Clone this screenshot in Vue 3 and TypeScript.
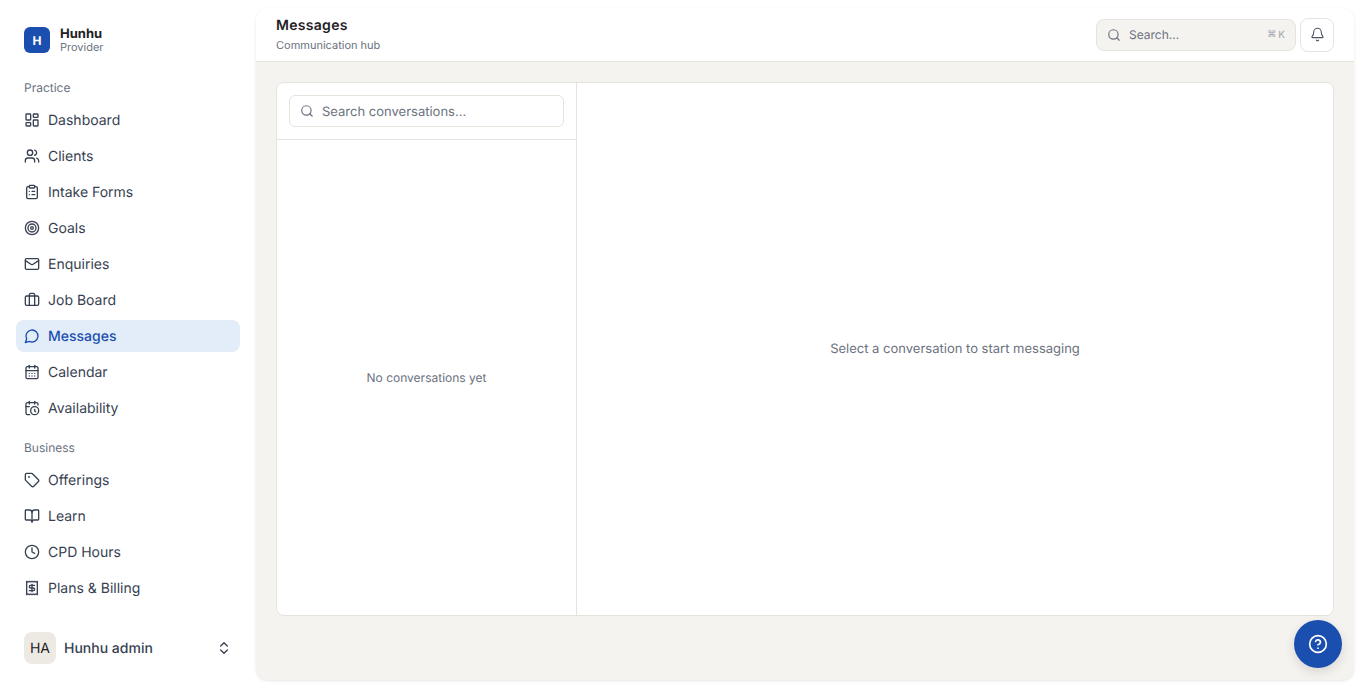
<script setup lang="ts">
interface NavItem { label: string; icon: string; active?: boolean }
const practice: NavItem[] = [
  { label: 'Dashboard', icon: 'dash' },
  { label: 'Clients', icon: 'users' },
  { label: 'Intake Forms', icon: 'clip' },
  { label: 'Goals', icon: 'target' },
  { label: 'Enquiries', icon: 'mail' },
  { label: 'Job Board', icon: 'brief' },
  { label: 'Messages', icon: 'msg', active: true },
  { label: 'Calendar', icon: 'cal' },
  { label: 'Availability', icon: 'calclock' },
]
const business: NavItem[] = [
  { label: 'Offerings', icon: 'tag' },
  { label: 'Learn', icon: 'book' },
  { label: 'CPD Hours', icon: 'clock' },
  { label: 'Plans & Billing', icon: 'receipt' },
]
const groups = [
  { title: 'Practice', items: practice },
  { title: 'Business', items: business },
]
const icons: Record<string, string> = {
  dash: '<rect width="7" height="9" x="3" y="3" rx="1"/><rect width="7" height="5" x="14" y="3" rx="1"/><rect width="7" height="9" x="14" y="12" rx="1"/><rect width="7" height="5" x="3" y="16" rx="1"/>',
  users: '<path d="M16 21v-2a4 4 0 0 0-4-4H6a4 4 0 0 0-4 4v2"/><circle cx="9" cy="7" r="4"/><path d="M22 21v-2a4 4 0 0 0-3-3.87"/><path d="M16 3.13a4 4 0 0 1 0 7.75"/>',
  clip: '<rect width="8" height="4" x="8" y="2" rx="1"/><path d="M16 4h2a2 2 0 0 1 2 2v14a2 2 0 0 1-2 2H6a2 2 0 0 1-2-2V6a2 2 0 0 1 2-2h2"/><path d="M12 11h4"/><path d="M12 16h4"/><path d="M8 11h.01"/><path d="M8 16h.01"/>',
  target: '<circle cx="12" cy="12" r="10"/><circle cx="12" cy="12" r="6"/><circle cx="12" cy="12" r="2"/>',
  mail: '<rect width="20" height="16" x="2" y="4" rx="2"/><path d="m22 7-8.97 5.7a1.94 1.94 0 0 1-2.06 0L2 7"/>',
  brief: '<path d="M16 20V4a2 2 0 0 0-2-2h-4a2 2 0 0 0-2 2v16"/><rect width="20" height="14" x="2" y="6" rx="2"/>',
  msg: '<path d="M7.9 20A9 9 0 1 0 4 16.1L2 22Z"/>',
  cal: '<path d="M8 2v4"/><path d="M16 2v4"/><rect width="18" height="18" x="3" y="4" rx="2"/><path d="M3 10h18"/><path d="M8 14h.01"/><path d="M12 14h.01"/><path d="M16 14h.01"/><path d="M8 18h.01"/><path d="M12 18h.01"/><path d="M16 18h.01"/>',
  calclock: '<path d="M21 7.5V6a2 2 0 0 0-2-2H5a2 2 0 0 0-2 2v14a2 2 0 0 0 2 2h3.5"/><path d="M16 2v4"/><path d="M8 2v4"/><path d="M3 10h5"/><path d="M17.5 17.5 16 16.3V14"/><circle cx="16" cy="16" r="6"/>',
  tag: '<path d="M12.586 2.586A2 2 0 0 0 11.172 2H4a2 2 0 0 0-2 2v7.172a2 2 0 0 0 .586 1.414l8.704 8.704a2.426 2.426 0 0 0 3.42 0l6.58-6.58a2.426 2.426 0 0 0 0-3.42z"/><circle cx="7.5" cy="7.5" r=".5" fill="currentColor"/>',
  book: '<path d="M12 7v14"/><path d="M3 18a1 1 0 0 1-1-1V4a1 1 0 0 1 1-1h5a4 4 0 0 1 4 4 4 4 0 0 1 4-4h5a1 1 0 0 1 1 1v13a1 1 0 0 1-1 1h-6a3 3 0 0 0-3 3 3 3 0 0 0-3-3z"/>',
  clock: '<circle cx="12" cy="12" r="10"/><polyline points="12 6 12 12 16 14"/>',
  receipt: '<path d="M4 2v20l2-1 2 1 2-1 2 1 2-1 2 1 2-1 2 1V2l-2 1-2-1-2 1-2-1-2 1-2-1-2 1Z"/><path d="M16 8h-6a2 2 0 1 0 0 4h4a2 2 0 1 1 0 4H8"/><path d="M12 17.5v-11"/>',
}
</script>

<template>
  <div class="app">
    <aside class="sidebar">
      <div class="brand">
        <div class="logo">H</div>
        <div class="brand-text">
          <div class="brand-name">Hunhu</div>
          <div class="brand-role">Provider</div>
        </div>
      </div>
      <nav class="nav">
        <section v-for="g in groups" :key="g.title" class="group">
          <div class="group-title">{{ g.title }}</div>
          <a v-for="item in g.items" :key="item.label" class="nav-item" :class="{ active: item.active }">
            <svg class="ico" viewBox="0 0 24 24" v-html="icons[item.icon]"></svg>
            <span>{{ item.label }}</span>
          </a>
        </section>
      </nav>
      <div class="user">
        <div class="avatar">HA</div>
        <span class="user-name">Hunhu admin</span>
        <svg class="chev" viewBox="0 0 24 24"><path d="m7 15 5 5 5-5"/><path d="m7 9 5-5 5 5"/></svg>
      </div>
    </aside>
    <main class="main">
      <header class="top">
        <div>
          <h1 class="title">Messages</h1>
          <p class="sub">Communication hub</p>
        </div>
        <div class="top-actions">
          <div class="cmd">
            <svg class="cmd-ico" viewBox="0 0 24 24"><circle cx="11" cy="11" r="8"/><path d="m21 21-4.3-4.3"/></svg>
            <span class="cmd-text">Search...</span>
            <span class="kbd"><span class="kbd-sym">⌘</span>K</span>
          </div>
          <button class="bell">
            <svg viewBox="0 0 24 24"><path d="M10.268 21a2 2 0 0 0 3.464 0"/><path d="M3.262 15.326A1 1 0 0 0 4 17h16a1 1 0 0 0 .74-1.673C19.41 13.956 18 12.499 18 8A6 6 0 0 0 6 8c0 4.499-1.411 5.956-2.738 7.326"/></svg>
          </button>
        </div>
      </header>
      <div class="content">
        <div class="panel">
          <div class="list">
            <div class="list-head">
              <div class="search">
                <svg viewBox="0 0 24 24"><circle cx="11" cy="11" r="8"/><path d="m21 21-4.3-4.3"/></svg>
                <span class="search-text">Search conversations...</span>
              </div>
            </div>
            <div class="list-empty">No conversations yet</div>
          </div>
          <div class="detail">Select a conversation to start messaging</div>
        </div>
      </div>
      <button class="help">
        <svg viewBox="0 0 24 24"><circle cx="12" cy="12" r="10"/><path d="M9.09 9a3 3 0 0 1 5.83 1c0 2-3 3-3 3"/><path d="M12 17h.01"/></svg>
      </button>
    </main>
  </div>
</template>

<style>
html, body { margin: 0; background: #fff; }
</style>

<style scoped>
* { box-sizing: border-box; }
.app {
  display: flex;
  height: 688px;
  width: 1362px;
  padding: 8px 8px 8px 0;
  font-family: Inter, "Liberation Sans", sans-serif;
  text-rendering: geometricPrecision;
  background: #fff;
  overflow: hidden;
}
.sidebar {
  width: 256px;
  margin: -8px 0;
  flex: none;
  display: flex;
  flex-direction: column;
  padding: 0 16px;
}
.brand {
  display: flex;
  align-items: center;
  gap: 10px;
  height: 32px;
  margin: 24px 8px 0;
}
.logo {
  width: 26px;
  height: 26px;
  border-radius: 6px;
  background: #1a4fb0;
  color: #fff;
  font-size: 12px;
  font-weight: 700;
  display: flex;
  align-items: center;
  justify-content: center;
}
.brand-name { padding-top: 1px; font-size: 13px; font-weight: 700; line-height: 14px; color: #1f2126; }
.brand-role { margin-top: -1px; font-size: 11px; line-height: 14px; color: #6b7280; }
.nav { display: flex; flex-direction: column; gap: 8px; margin-top: 20px; }
.group-title {
  font-size: 12px;
  line-height: 16px;
  color: #6b7280;
  padding: 0 8px;
  height: 24px;
  margin-bottom: 4px;
  display: flex;
  align-items: center;
}
.nav-item {
  display: flex;
  align-items: center;
  gap: 8px;
  height: 32px;
  margin-bottom: 4px;
  padding: 0 8px;
  border-radius: 8px;
  font-size: 14px;
  color: #374151;
}
.nav-item.active { background: #e3edf9; color: #1a4fb0; font-weight: 500; }
.ico {
  width: 16px;
  height: 16px;
  flex: none;
  fill: none;
  stroke: currentColor;
  stroke-width: 2;
  stroke-linecap: round;
  stroke-linejoin: round;
}
.user {
  margin-top: auto;
  margin-bottom: 24px;
  display: flex;
  align-items: center;
  padding: 0 8px;
  height: 32px;
}
.avatar {
  width: 32px;
  height: 32px;
  border-radius: 8px;
  background: #ede9e3;
  color: #1f2126;
  font-size: 14px;
  display: flex;
  align-items: center;
  justify-content: center;
}
.user-name { margin-left: 8px; font-size: 14px; font-weight: 500; color: #374151; flex: 1; }
.chev {
  width: 16px;
  height: 16px;
  fill: none;
  stroke: #374151;
  stroke-width: 2;
  stroke-linecap: round;
  stroke-linejoin: round;
}
.main {
  flex: 1;
  position: relative;
  display: flex;
  flex-direction: column;
  background: #f4f3ef;
  border-radius: 12px;
  box-shadow: 0 1px 3px rgba(0, 0, 0, 0.1);
  overflow: hidden;
}
.top {
  height: 54px;
  flex: none;
  background: #fff;
  border-bottom: 1px solid #e5e3dc;
  display: flex;
  align-items: center;
  justify-content: space-between;
  padding: 0 20px;
}
.title { margin: 0; font-size: 14px; line-height: 18px; font-weight: 600; color: #1f2126; letter-spacing: 0.3px; }
.sub { margin: 3px 0 0; font-size: 11px; line-height: 14px; color: #6b7280; }
.top-actions { display: flex; align-items: center; gap: 4px; }
.cmd {
  width: 200px;
  height: 32px;
  border-radius: 8px;
  border: 1px solid #e5e3dc;
  background: #f4f3ef;
  display: flex;
  align-items: center;
  padding: 0 10px;
  font-size: 12px;
  color: #6b7280;
}
.cmd-ico, .search svg {
  width: 14px;
  height: 14px;
  fill: none;
  stroke: #6b7280;
  stroke-width: 2;
  stroke-linecap: round;
  stroke-linejoin: round;
  flex: none;
}
.cmd-text { margin-left: 8px; flex: 1; }
.kbd { font-size: 10px; color: #9ca3af; display: flex; align-items: center; gap: 2px; }
.kbd-sym { font-size: 9px; }
.bell {
  width: 34px;
  height: 34px;
  padding: 0;
  border-radius: 8px;
  border: 1px solid #e5e3dc;
  background: #fff;
  display: flex;
  align-items: center;
  justify-content: center;
}
.bell svg {
  width: 15px;
  height: 15px;
  fill: none;
  stroke: #4b5563;
  stroke-width: 1.75;
  stroke-linecap: round;
  stroke-linejoin: round;
}
.content { flex: 1; padding: 20px 20px 64px; min-height: 0; }
.panel {
  height: 100%;
  display: flex;
  background: #fff;
  border: 1px solid #e5e3dc;
  border-radius: 8px;
  overflow: hidden;
}
.list {
  width: 300px;
  flex: none;
  border-right: 1px solid #e5e3dc;
  display: flex;
  flex-direction: column;
}
.list-head { padding: 12px; border-bottom: 1px solid #e5e3dc; height: 57px; }
.search {
  height: 32px;
  border: 1px solid #e5e3dc;
  border-radius: 6px;
  display: flex;
  align-items: center;
  padding: 0 10px;
  gap: 8px;
  font-size: 13px;
  color: #6b7280;
}
.search-text { padding-top: 2px; }
.list-empty {
  flex: 1;
  display: flex;
  align-items: center;
  justify-content: center;
  font-size: 12px;
  color: #6b7280;
}
.detail {
  flex: 1;
  display: flex;
  align-items: center;
  justify-content: center;
  font-size: 13px;
  color: #6b7280;
}
.help {
  position: absolute;
  right: 12px;
  bottom: 12px;
  width: 48px;
  height: 48px;
  padding: 0;
  border: none;
  border-radius: 50%;
  background: #1a4fb0;
  box-shadow: 0 4px 12px rgba(0, 0, 0, 0.12);
  display: flex;
  align-items: center;
  justify-content: center;
}
.help svg {
  width: 20px;
  height: 20px;
  fill: none;
  stroke: #fff;
  stroke-width: 2;
  stroke-linecap: round;
  stroke-linejoin: round;
}
</style>
